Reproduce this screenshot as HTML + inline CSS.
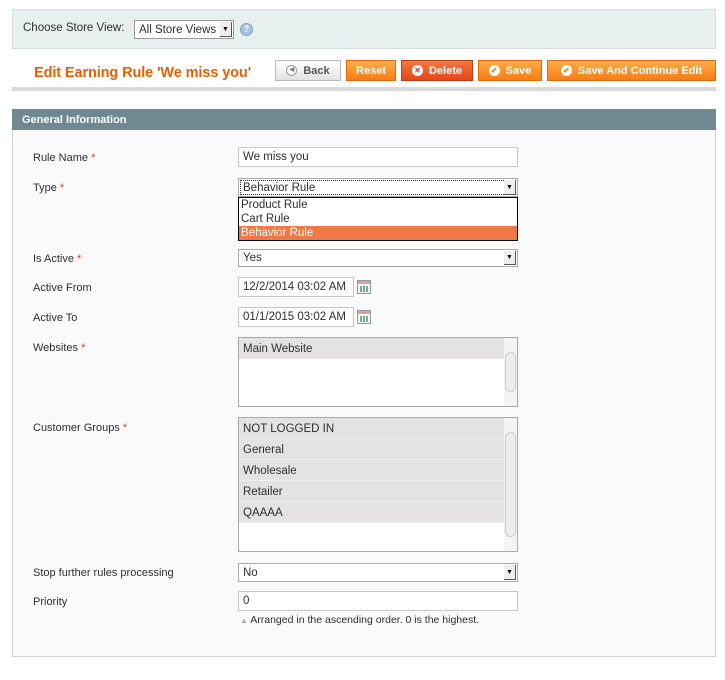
<!DOCTYPE html><html><head><style>
*{box-sizing:border-box;margin:0;padding:0}
body{width:725px;height:680px;background:#fff;font-family:"Liberation Sans",Arial,sans-serif;font-size:11px;color:#2f2f2f;position:relative;overflow:hidden}
.a{position:absolute}
.btn{position:absolute;top:60px;height:21px;border:1px solid #e06b0c;background:linear-gradient(#ffac47,#f77c16);color:#fff;font-weight:bold;font-size:11px;display:flex;align-items:center;justify-content:center}
.ic{display:inline-block;width:11px;height:11px;border-radius:50%;background:#fff;margin-right:6px;color:#f58020;font-size:8px;line-height:11px;text-align:center}
.lbl{position:absolute;left:33px;font-size:11px}
.req{color:#eb340a}
.in{position:absolute;left:238px;width:280px;height:20px;border:1px solid #c8c8c8;background:#fff;padding-left:4px;line-height:19px;font-size:11.5px}
.sel{border-color:#aaa}
.arr{position:absolute;right:1px;top:1px;width:12px;height:16px;background:#eee;border-right:1px solid #555;border-bottom:1px solid #555;font-size:7px;line-height:16px;text-align:center;color:#000}
.ms{position:absolute;left:238px;width:280px;border:1px solid #aaa;background:#fff}
.opt{height:21px;background:#e5e3e1;border-bottom:1px solid #efefef;padding-left:4px;line-height:22px;font-size:11.5px;margin-right:13px}
.sb{position:absolute;right:0;top:0;bottom:0;width:13px;background:#f4f4f4}
.sb div{position:absolute;left:1px;right:1px;top:14px;bottom:14px;border:1px solid #ccc;border-radius:6px;background:#eee}
.cal{position:absolute;left:357px;width:14px;height:14px;border:1px solid #89a;background:linear-gradient(#e99 0 3px,#fff 3px);}
.cal:after{content:"";position:absolute;left:2px;top:5px;width:8px;height:6px;background:repeating-linear-gradient(90deg,#7a9 0 2px,#fff 2px 3px)}
</style></head><body>
<div class="a" style="left:12px;top:9px;width:704px;height:40px;background:#e7efef;border:1px solid #d4dcdc"></div>
<div class="a" style="left:23px;top:22px;font-size:11.5px">Choose Store View:</div>
<div class="a" style="left:134px;top:20px;width:100px;height:19px;border:1px solid #999;background:#fff;padding-left:4px;line-height:18px;font-size:11.5px">All Store Views<div class="arr" style="height:15px;line-height:15px">▼</div></div>
<div class="a" style="left:240px;top:23px;width:13px;height:13px;border-radius:50%;background:#a7c2e0;border:1px solid #7fa0c9;color:#fff;font-size:9px;text-align:center;line-height:11px;font-weight:bold">?</div>
<div class="a" style="left:34px;top:65px;color:#eb5e00;font-weight:bold;font-size:14.5px;letter-spacing:-0.1px">Edit Earning Rule 'We miss you'</div>
<div class="btn" style="left:275px;width:66px;background:linear-gradient(#fff,#e3e3e3);border-color:#bbb;color:#555"><span class="ic" style="border:1px solid #999;color:#777;font-size:6px;line-height:9px">◀</span>Back</div>
<div class="btn" style="left:346px;width:50px">Reset</div>
<div class="btn" style="left:401px;width:72px;background:linear-gradient(#f6763f,#e4471a);border-color:#c33d10"><span class="ic" style="color:#d33">✕</span>Delete</div>
<div class="btn" style="left:478px;width:64px"><span class="ic">✔</span>Save</div>
<div class="btn" style="left:547px;width:169px"><span class="ic">✔</span>Save And Continue Edit</div>
<div class="a" style="left:12px;top:87px;width:704px;height:4px;background:#dadada"></div>
<div class="a" style="left:12px;top:109px;width:704px;height:21px;background:#6f8992;color:#fff;font-weight:bold;padding-left:10px;line-height:23px">General Information</div>
<div class="a" style="left:12px;top:130px;width:704px;height:527px;background:#fafafa;border:1px solid #d6d6d6;border-top:0"></div>

<div class="lbl" style="top:152px">Rule Name <span class="req">*</span></div>
<div class="in" style="top:147px">We miss you</div>
<div class="lbl" style="top:182px">Type <span class="req">*</span></div>
<div class="in sel" style="top:178px;height:19px;outline:1px dotted #333;outline-offset:-3px;line-height:18px">Behavior Rule<div class="arr" style="height:15px">▼</div></div>
<div class="a" style="left:238px;top:197px;width:280px;height:44px;border:1px solid #000;background:#fff;font-size:11.5px;line-height:14px">
<div style="padding-left:2px">Product Rule</div><div style="padding-left:2px">Cart Rule</div><div style="padding-left:2px;background:#f07746;color:#fff">Behavior Rule</div></div>
<div class="lbl" style="top:253px">Is Active <span class="req">*</span></div>
<div class="in sel" style="top:249px;height:18px;line-height:17px">Yes<div class="arr" style="height:14px;line-height:14px">▼</div></div>
<div class="lbl" style="top:282px">Active From</div>
<div class="in" style="top:277px;width:116px;height:20px">12/2/2014 03:02 AM</div><div class="cal" style="top:280px"></div>
<div class="lbl" style="top:312px">Active To</div>
<div class="in" style="top:307px;width:116px;height:20px">01/1/2015 03:02 AM</div><div class="cal" style="top:310px"></div>
<div class="lbl" style="top:342px">Websites <span class="req">*</span></div>
<div class="ms" style="top:337px;height:70px"><div class="opt">Main Website</div><div class="sb"><div></div></div></div>
<div class="lbl" style="top:422px">Customer Groups <span class="req">*</span></div>
<div class="ms" style="top:417px;height:135px"><div class="opt">NOT LOGGED IN</div><div class="opt">General</div><div class="opt">Wholesale</div><div class="opt">Retailer</div><div class="opt">QAAAA</div><div class="sb"><div></div></div></div>
<div class="lbl" style="top:567px">Stop further rules processing</div>
<div class="in sel" style="top:563px;height:19px;line-height:18px">No<div class="arr" style="height:15px;line-height:15px">▼</div></div>
<div class="lbl" style="top:596px">Priority</div>
<div class="in" style="top:591px">0</div>
<div class="a" style="left:240px;top:614px;font-size:10.5px"><span style="color:#aaa;font-size:8px">▲</span> Arranged in the ascending order. 0 is the highest.</div>
</body></html>
